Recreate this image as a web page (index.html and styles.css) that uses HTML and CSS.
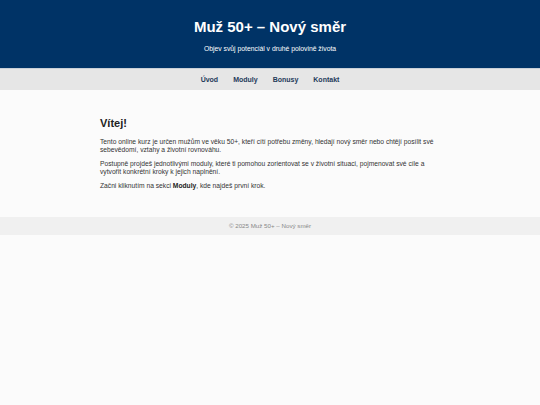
FILE: index.html
```html
<!DOCTYPE html>
<html lang="cs">
<head>
<meta charset="utf-8">
<title>Muž 50+ – Nový směr</title>
<link rel="stylesheet" href="styles.css">
</head>
<body>
<header class="site-header">
  <h1 class="site-title">Muž 50+ – Nový směr</h1>
  <p class="site-tagline">Objev svůj potenciál v druhé polovině života</p>
</header>
<nav class="site-nav">
  <a href="#">Úvod</a>
  <a href="#">Moduly</a>
  <a href="#">Bonusy</a>
  <a href="#">Kontakt</a>
</nav>
<main class="content">
  <h2 class="content-title">Vítej!</h2>
  <p>Tento online kurz je určen mužům ve věku 50+, kteří cítí potřebu změny, hledají nový směr nebo chtějí posílit své sebevědomí, vztahy a životní rovnováhu.</p>
  <p>Postupně projdeš jednotlivými moduly, které ti pomohou zorientovat se v životní situaci, pojmenovat své cíle a vytvořit konkrétní kroky k jejich naplnění.</p>
  <p>Začni kliknutím na sekci <strong>Moduly</strong>, kde najdeš první krok.</p>
</main>
<footer class="site-footer">© 2025 Muž 50+ – Nový směr</footer>
</body>
</html>
```
FILE: styles.css
```css
html, body {
  margin: 0;
  padding: 0;
}
body {
  background: #fbfbfb;
  font-family: "Liberation Sans", Arial, sans-serif;
  color: #333;
}
.site-header {
  background: #003366;
  color: #fff;
  text-align: center;
  height: 68px;
  box-sizing: border-box;
  padding-top: 18px;
}
.site-title {
  margin: 0;
  font-size: 15px;
  font-weight: bold;
  line-height: 18px;
}
.site-tagline {
  margin: 9px 0 0;
  font-size: 6.8px;
  line-height: 8px;
}
.site-nav {
  background: #e6e6e6;
  border-top: 1px solid #c9d0d8;
  height: 21px;
  display: flex;
  justify-content: center;
  align-items: center;
  gap: 15px;
}
.site-nav a {
  color: #1f3a5a;
  font-weight: bold;
  font-size: 7px;
  text-decoration: none;
}
.content {
  max-width: 340px;
  margin: 0 auto;
  padding: 27px 0 21px;
  font-size: 6.7px;
  line-height: 8px;
}
.content-title {
  margin: 0 0 8px;
  font-size: 11px;
  line-height: 13px;
  color: #222;
}
.content p {
  margin: 0 0 6px;
}
.content strong {
  color: #222;
}
.site-footer {
  background: #f0f0f0;
  color: #888;
  text-align: center;
  font-size: 6.2px;
  height: 18px;
  line-height: 18px;
}
```
